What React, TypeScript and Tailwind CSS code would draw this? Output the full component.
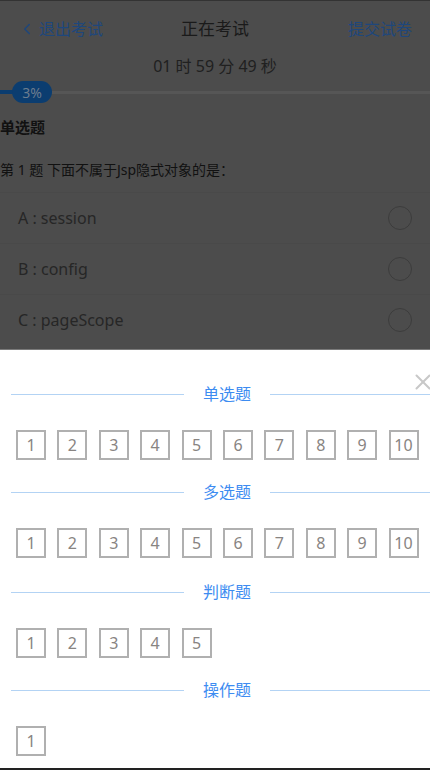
import React from 'react';
import { ChevronLeft, X } from 'lucide-react';

const options = ['A : session', 'B : config', 'C : pageScope'];

const sections = [
  { title: '单选题', count: 10, gap: 'mb-[16px]' },
  { title: '多选题', count: 10, gap: 'mb-[18px]' },
  { title: '判断题', count: 5, gap: 'mb-[16px]' },
  { title: '操作题', count: 1, gap: 'mb-0' },
];

function SectionTitle({ title }: { title: string }) {
  return (
    <div className="flex items-center h-[32px]">
      <div className="ml-[11px] w-[173px] h-px bg-[#b3d3f4]" />
      <span className="mx-[19px] text-[16px] text-[#3d8cf1] leading-none">{title}</span>
      <div className="flex-1 h-px bg-[#b3d3f4]" />
    </div>
  );
}

export default function App() {
  return (
    <div
      className="w-[430px] h-[770px] overflow-hidden flex flex-col bg-[#4c4c4c]"
      style={{ fontFamily: '"Noto Sans", "Noto Sans CJK SC", sans-serif' }}
    >
      {/* dimmed exam page */}
      <div className="shrink-0 flex flex-col">
        <div className="h-px bg-[#333333]" />
        <div className="h-[55px] flex items-center pl-[18px] pr-[18px] text-[16px]">
          <div className="flex items-center gap-[3px] text-[#1e477c] w-[120px]">
            <ChevronLeft className="w-[18px] h-[18px]" strokeWidth={2} />
            <span>退出考试</span>
          </div>
          <div className="flex-1 text-center text-[17px] text-[#1a1a1a]">正在考试</div>
          <div className="w-[120px] text-right text-[#1e477c]">提交试卷</div>
        </div>
        <div className="h-[20px] leading-[20px] text-center text-[16px] text-[#202020]">
          01 时 59 分 49 秒
        </div>
        <div className="relative h-[32px]">
          <div className="absolute inset-x-0 top-[15px] h-[3px] bg-[#565656]" />
          <div className="absolute left-0 w-[16px] top-[14px] h-[4px] bg-[#0b3d70]" />
          <div className="absolute left-[12px] top-[5px] w-[40px] h-[22px] rounded-full bg-[#0b3d70] flex items-center justify-center text-[14px] text-[#6b7c8e]">
            3%
          </div>
        </div>
        <div className="h-[38px] flex items-center text-[15px] font-bold text-[#111111]">单选题</div>
        <div className="h-[46px] flex items-center text-[14px] text-[#111111]">
          第 1 题 下面不属于Jsp隐式对象的是：
        </div>
        {options.map((o) => (
          <div
            key={o}
            className="h-[51px] flex items-center justify-between pl-[18px] pr-[18px] border-t border-[#494949]"
          >
            <span className="text-[16px] text-[#262626]">{o}</span>
            <span className="w-[24px] h-[24px] rounded-full border border-[#3c3c3c]" />
          </div>
        ))}
        <div className="h-[4px]" />
      </div>

      {/* answer sheet panel */}
      <div className="relative flex-1 min-h-0 overflow-hidden bg-white border-t border-[#7a7a7a] pt-[28px]">
        <X className="absolute right-[-6px] top-[19px] w-[26px] h-[26px] text-[#c8c8c8]" strokeWidth={1.8} />
        {sections.map((s) => (
          <div key={s.title} className={s.gap}>
            <SectionTitle title={s.title} />
            <div className="mt-[20px] flex gap-[11.4px] pl-[16px]">
              {Array.from({ length: s.count }, (_, i) => (
                <div
                  key={i}
                  className="w-[30px] h-[30px] border-2 border-[#b0b0b0] flex items-center justify-center text-[16px] text-[#888482]"
                >
                  {i + 1}
                </div>
              ))}
            </div>
          </div>
        ))}
      </div>
      <div className="h-[2px] shrink-0 bg-[#222222]" />
    </div>
  );
}
